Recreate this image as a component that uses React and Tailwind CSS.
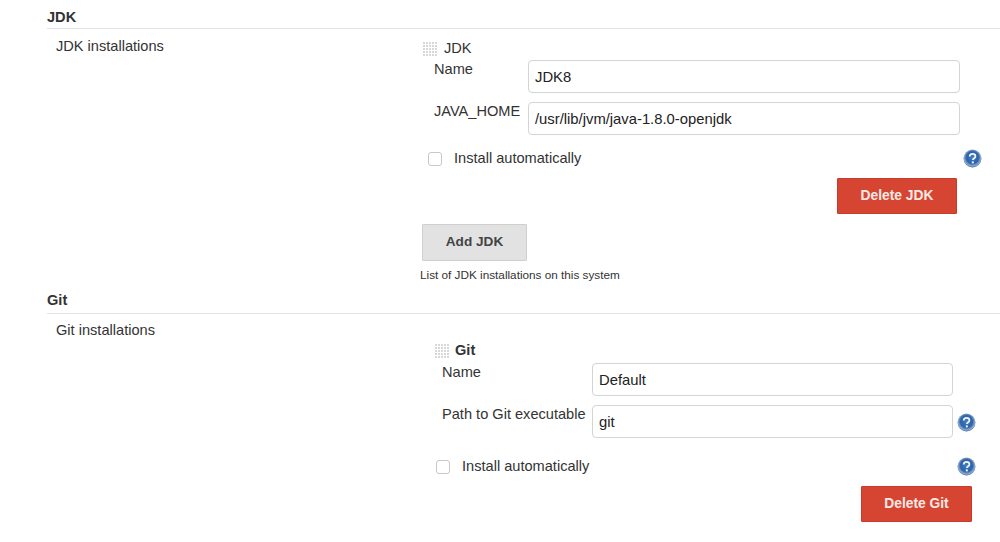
function Grip() {
  const dots = [];
  for (let y = 0; y < 5; y++) {
    for (let x = 0; x < 5; x++) {
      dots.push(<rect key={x + "-" + y} x={x * 3} y={y * 3} width="2" height="2" fill="#d8d8d8" />);
    }
  }
  return (
    <svg width="14" height="14" viewBox="0 0 14 14" className="shrink-0">
      {dots}
    </svg>
  );
}

function Help({ id }) {
  return (
    <svg width="19" height="19" viewBox="0 0 19 19" className="shrink-0">
      <defs>
        <radialGradient id={id} cx="50%" cy="45%" r="55%">
          <stop offset="0%" stopColor="#3f7fc4" />
          <stop offset="60%" stopColor="#2c62a8" />
          <stop offset="85%" stopColor="#8fabd0" />
          <stop offset="100%" stopColor="#3f689f" />
        </radialGradient>
      </defs>
      <circle cx="9.5" cy="9.5" r="9" fill={`url(#${id})`} />
      <path d="M6.7 7.4c0-1.7 1.3-2.6 2.9-2.6s2.8.9 2.8 2.4c0 1.2-.7 1.8-1.5 2.3-.7.5-1 .8-1 1.6" fill="none" stroke="#eef3fa" strokeWidth="1.8" />
      <rect x="8.8" y="12.4" width="2" height="2" fill="#eef3fa" />
    </svg>
  );
}

function Field({ label, value, labelW, inputW, help }) {
  return (
    <div className="flex h-[33px] items-start">
      <div className={"text-[14.6px] leading-[18px] text-[#333] " + labelW}>{label}</div>
      <input
        readOnly
        value={value}
        className={"h-[33px] rounded-[4px] border border-[#d4d4d4] bg-white px-[6px] text-[14.8px] text-[#222] " + inputW}
      />
      {help && <div className="ml-[4px] mt-[8px]"><Help id="help-path" /></div>}
    </div>
  );
}

function Install({ id, widthClass }) {
  return (
    <div className={"flex h-[19px] items-center " + widthClass}>
      <span className="h-[14px] w-[14px] shrink-0 rounded-[3px] border border-[#c8c8c8] bg-white" />
      <span className="ml-[12px] flex-1 text-[14.6px] text-[#333]">Install automatically</span>
      <Help id={id} />
    </div>
  );
}

export default function App() {
  return (
    <div className="h-[542px] w-[1000px] overflow-hidden bg-white pl-[47px] font-['Liberation_Sans',Arial,sans-serif]">
      <h2 className="pt-[9px] text-[14.6px] leading-[17px] font-bold text-[#333]">JDK</h2>
      <div className="mt-[2px] h-px bg-[#e4e4e4]" />
      <div className="flex">
        <div className="w-[373px] pt-[8px] pl-[9px] text-[14.6px] leading-[18px] text-[#333]">JDK installations</div>
        <div className="pt-[13px]">
          <div className="flex h-[14px] items-center pl-[3px]">
            <Grip />
            <span className="ml-[7px] text-[14.6px] text-[#333]">JDK</span>
          </div>
          <div className="mt-[4px] flex flex-col gap-[9px] pl-[14px]">
            <Field label="Name" value="JDK8" labelW="w-[94px]" inputW="w-[432px]" />
            <Field label="JAVA_HOME" value="/usr/lib/jvm/java-1.8.0-openjdk" labelW="w-[94px]" inputW="w-[432px]" />
          </div>
          <div className="mt-[14px] pl-[8px]">
            <Install id="help-jdk" widthClass="w-[554px]" />
          </div>
          <div className="mt-[10px] flex justify-end pr-[25px]">
            <button className="h-[36px] w-[120px] rounded-[1px] border border-[#c9392a] bg-[#d64532] text-[13.8px] font-bold text-[#fbe9e6]">Delete JDK</button>
          </div>
          <button className="mt-[10px] ml-[2px] block h-[37px] w-[105px] rounded-[1px] border border-[#cfcfcf] bg-[#e2e2e2] text-[13.6px] font-bold text-[#444]">Add JDK</button>
          <p className="mt-[7px] text-[11.75px] leading-[14px] text-[#333]">List of JDK installations on this system</p>
        </div>
      </div>
      <h2 className="mt-[10px] text-[14.6px] leading-[17px] font-bold text-[#333]">Git</h2>
      <div className="mt-[4px] h-px bg-[#e4e4e4]" />
      <div className="flex">
        <div className="w-[373px] pt-[7px] pl-[9px] text-[14.6px] leading-[18px] text-[#333]">Git installations</div>
        <div className="pt-[30px]">
          <div className="flex h-[14px] items-center pl-[15px]">
            <Grip />
            <span className="ml-[6px] text-[14.6px] font-bold text-[#333]">Git</span>
          </div>
          <div className="mt-[5px] flex flex-col gap-[9px] pl-[22px]">
            <Field label="Name" value="Default" labelW="w-[150px]" inputW="w-[361px]" />
            <Field label="Path to Git executable" value="git" labelW="w-[150px]" inputW="w-[361px]" help />
          </div>
          <div className="mt-[19px] pl-[16px]">
            <Install id="help-git" widthClass="w-[540px]" />
          </div>
          <div className="mt-[10px] ml-[441px]">
            <button className="h-[36px] w-[111px] rounded-[1px] border border-[#c9392a] bg-[#d64532] text-[13.8px] font-bold text-[#fbe9e6]">Delete Git</button>
          </div>
        </div>
      </div>
    </div>
  );
}
